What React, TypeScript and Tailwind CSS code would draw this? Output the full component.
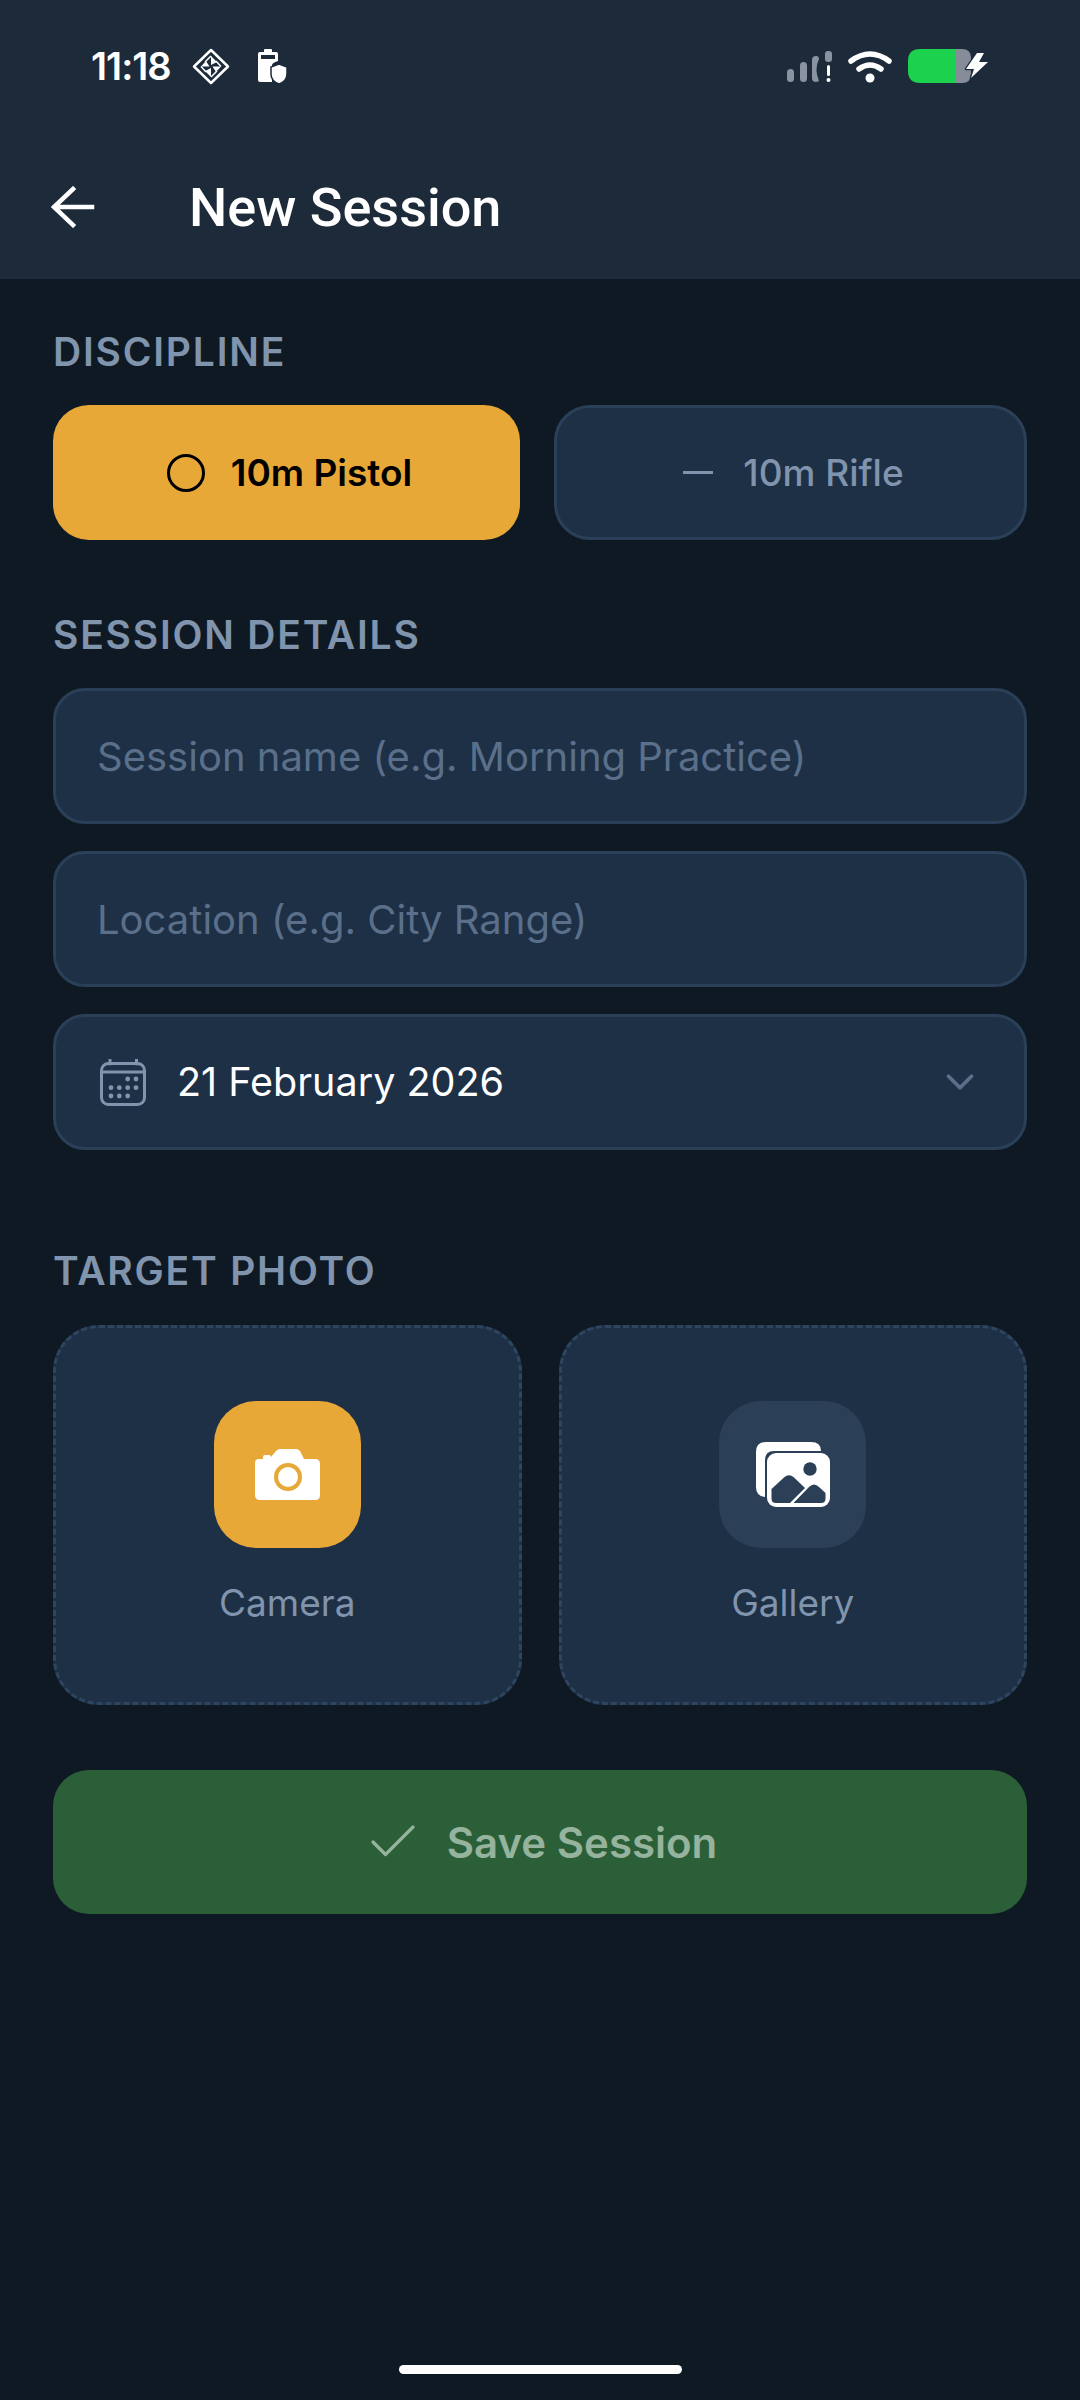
import { Check, ChevronDown } from "lucide-react";

function DiamondIcon() {
    return (
        <svg width="38" height="37" viewBox="0 0 38 37" fill="none">
            <path d="M19 2 L36 18.500 L19 35 L2 18.500 Z" stroke="#fff" strokeWidth="2.500" strokeLinejoin="round" />
            <path d="M19 8 L25 14 L19 17 Z M19 29 L13 23 L19 20 Z M9 18.500 L14 13 L17.500 18.500 Z M29 18.500 L24 24 L20.500 18.500 Z" fill="#fff" />
            <path d="M19 8 L13 14 M19 29 L25 23 M9 18.500 L14 24 M29 18.500 L24 13" stroke="#fff" strokeWidth="1.500" />
        </svg>
    );
}

function BatteryShieldIcon() {
    return (
        <svg width="29" height="35" viewBox="0 0 29 35" fill="#fff">
            <path d="M6 3 V1 Q6 0 7 0 H13 Q14 0 14 1 V3 H18 Q20 3 20 5 V12 Q14 14 14 16 V33 H2 Q0 33 0 31 V5 Q0 3 2 3 Z M3 6 V10 H17 V6 Z" fillRule="evenodd" />
            <path d="M21 15 L29 18 V25 Q29 32 21 35 Q13 32 13 25 V18 Z" stroke="#1c2a3a" strokeWidth="1.5" />
        </svg>
    );
}

function SignalIcon() {
    return (
        <svg width="45" height="31" viewBox="0 0 45 31">
            <rect x="0" y="18" width="7" height="13" rx="3.5" fill="#8a93a0" />
            <rect x="13" y="11" width="7" height="20" rx="3.5" fill="#8a93a0" />
            <path d="M29 5 Q32 5 32 8 Q27 18 32 30 Q30 31 29 31 Q25 31 25 27 V9 Q25 5 29 5 Z" fill="#8a93a0" />
            <rect x="38" y="0" width="7" height="11" rx="3" fill="#8a93a0" />
            <rect x="40" y="14" width="3" height="11" rx="1.5" fill="#fff" />
            <circle cx="41.5" cy="29" r="2" fill="#fff" />
        </svg>
    );
}

function WifiIcon() {
    return (
        <svg width="44" height="33" viewBox="0 0 44 33" fill="none">
            <path d="M3 11 Q22 -3 41 11" stroke="#fff" strokeWidth="5.500" strokeLinecap="round" />
            <path d="M11 19 Q22 11 33 19" stroke="#fff" strokeWidth="5.500" strokeLinecap="round" />
            <circle cx="22" cy="28" r="4.5" fill="#fff" />
        </svg>
    );
}

function BatteryIcon() {
    return (
        <svg width="80" height="34" viewBox="0 0 80 34">
            <path d="M47 0 H54 Q63 0 63 9 V25 Q63 34 54 34 H47 Z" fill="#868d99" />
            <path d="M12 0 H47 V34 H12 Q0 34 0 22 V12 Q0 0 12 0 Z" fill="#1bd14e" />
            <path d="M69 4 L58 20 L66 20 L63 29 L80 13 L71 13 L76 4 Z" fill="#fff" stroke="#1c2a3a" strokeWidth="2.5" paintOrder="stroke" strokeLinejoin="round" />
        </svg>
    );
}

function BackArrow() {
    return (
        <svg width="44" height="42" viewBox="0 0 44 42" fill="none" stroke="#fff" strokeWidth="4.500" strokeLinecap="square">
            <path d="M41 21 H4 M22 3 L3 21 L22 39" />
        </svg>
    );
}

function CalendarIcon() {
    const dots = [
        [27.7, 20], [36, 20],
        [11, 28.7], [19.3, 28.7], [27.7, 28.7], [36, 28.7],
        [11, 37], [19.3, 37], [27.7, 37],
    ];
    return (
        <svg width="46" height="47" viewBox="0 0 46 47" fill="none">
            <rect x="1.500" y="4.500" width="43" height="41" rx="7" stroke="#8094ad" strokeWidth="3" />
            <path d="M1.500 13 H44.500 M10 0.500 V5 M36.500 0.500 V5" stroke="#8094ad" strokeWidth="3" strokeLinecap="round" />
            {dots.map(([x, y]) => (
                <circle key={`${x}-${y}`} cx={x} cy={y} r="2.400" fill="#8094ad" />
            ))}
        </svg>
    );
}

function CameraIcon() {
    return (
        <svg width="65" height="51" viewBox="0 0 65 51">
            <path d="M4 10 H8 V8 Q8 6 10 6 H14 Q16 6 16 8 L21 2 Q23 0 25 0 H41 Q43 0 45 2 L49 10 H60 Q65 10 65 15 V46 Q65 51 60 51 H5 Q0 51 0 46 V14 Q0 10 4 10 Z" fill="#fff" />
            <circle cx="33" cy="28" r="12" fill="#fff" stroke="#e8a838" strokeWidth="4" />
        </svg>
    );
}

function GalleryIcon() {
    return (
        <svg width="74" height="65" viewBox="0 0 74 65">
            <path d="M10 0 H55 Q65 0 65 9 H18 Q9 9 9 18 V55 Q0 54 0 45 V10 Q0 0 10 0 Z" fill="#fff" />
            <rect x="11" y="11" width="63" height="54" rx="9" fill="#fff" />
            <circle cx="54" cy="27" r="6.7" fill="#2b3f56" />
            <path d="M15.5 47 L28 35.500 Q33 31 38 35.500 L49 46 L34 61 H20 Q15.500 61 15.500 56.500 Z" fill="#2b3f56" />
            <path d="M37.500 61 L53 45 Q58 40 63 45 L69.500 51 V56.500 Q69.500 61 65 61 Z" fill="#2b3f56" />
        </svg>
    );
}

function SectionLabel({ children }: { children: string }) {
    return <div className="text-[39px] leading-[46px] font-semibold tracking-[1.8px] text-[#8094ad]">{children}</div>;
}

function Field({ children }: { children: React.ReactNode }) {
    return (
        <div className="flex h-[136px] items-center rounded-[32px] border-[3px] border-[#2a4058] bg-[#1e3045] px-[41px] text-[40px]">
            {children}
        </div>
    );
}

function PhotoSource({ label, active, icon }: { label: string; active?: boolean; icon: React.ReactNode }) {
    return (
        <div className="flex h-[380px] flex-1 flex-col items-center rounded-[46px] border-[3px] border-dashed border-[#2e4560] bg-[#1e3045] pt-[73px]">
            <div className={`flex size-[147px] items-center justify-center rounded-[42px] ${active ? "bg-[#e8a838]" : "bg-[#2b3f56]"}`}>
                {icon}
            </div>
            <div className="mt-[33px] text-[37px] leading-[44px] text-[#8094ad]">{label}</div>
        </div>
    );
}

export default function App() {
    return (
        <div className="flex h-[2400px] w-[1080px] flex-col bg-[#0f1923] font-['Inter',sans-serif]">
            {/* Header */}
            <header className="h-[279px] bg-[#1c2a3a] text-white">
                <div className="flex h-[132px] items-center justify-between pr-[92px] pl-[91px]">
                    <div className="flex items-center">
                        <span className="text-[38px] font-semibold tracking-[-1px]">11:18</span>
                        <span className="ml-[21px] flex"><DiamondIcon /></span>
                        <span className="ml-[28px] flex"><BatteryShieldIcon /></span>
                    </div>
                    <div className="flex items-center gap-[16px]">
                        <SignalIcon />
                        <WifiIcon />
                        <BatteryIcon />
                    </div>
                </div>
                <div className="flex h-[150px] items-center pl-[51px]">
                    <BackArrow />
                    <h1 className="ml-[94px] font-['Roboto',sans-serif] text-[54px] font-medium">New Session</h1>
                </div>
            </header>

            <main className="flex flex-col px-[53px]">
                <div className="mt-[50px]"><SectionLabel>DISCIPLINE</SectionLabel></div>
                <div className="mt-[30px] flex gap-[34px]">
                    <div className="flex h-[135px] flex-1 items-center justify-center gap-[26px] rounded-[36px] bg-[#e8a838] pl-[6px] text-[37px] font-semibold text-black">
                        <span className="size-[38px] rounded-full border-[3px] border-black" />
                        10m Pistol
                    </div>
                    <div className="flex h-[135px] flex-1 items-center justify-center gap-[30px] rounded-[36px] border-[3px] border-[#2a4058] bg-[#1e3045] pl-[6px] text-[37px] font-medium text-[#8094ad]">
                        <span className="h-[3px] w-[30px] bg-[#8094ad]" />
                        10m Rifle
                    </div>
                </div>

                <div className="mt-[72px]"><SectionLabel>SESSION DETAILS</SectionLabel></div>
                <div className="mt-[30px] flex flex-col gap-[27px]">
                    <Field><span className="pt-[2px] text-[#5a6f8a]">Session name (e.g. Morning Practice)</span></Field>
                    <Field><span className="pt-[2px] text-[#5a6f8a]">Location (e.g. City Range)</span></Field>
                    <Field>
                        <span className="ml-[3px] flex"><CalendarIcon /></span>
                        <span className="ml-[31px] pt-[2px] text-[39.5px] text-white">21 February 2026</span>
                        <ChevronDown className="ml-auto text-[#5a6f8a]" size={46} strokeWidth={2} />
                    </Field>
                </div>

                <div className="mt-[98px]"><SectionLabel>TARGET PHOTO</SectionLabel></div>
                <div className="mt-[31px] flex gap-[37px]">
                    <PhotoSource label="Camera" active icon={<CameraIcon />} />
                    <PhotoSource label="Gallery" icon={<GalleryIcon />} />
                </div>

                <div className="mt-[65px] flex h-[144px] items-center justify-center gap-[24px] rounded-[36px] bg-[#2b5f38] text-[42px] font-semibold text-[#95b39d]">
                    <Check size={60} strokeWidth={1.3} />
                    Save Session
                </div>
            </main>

            <div className="mt-auto mb-[26px] flex justify-center">
                <div className="h-[9px] w-[283px] rounded-full bg-white" />
            </div>
        </div>
    );
}
